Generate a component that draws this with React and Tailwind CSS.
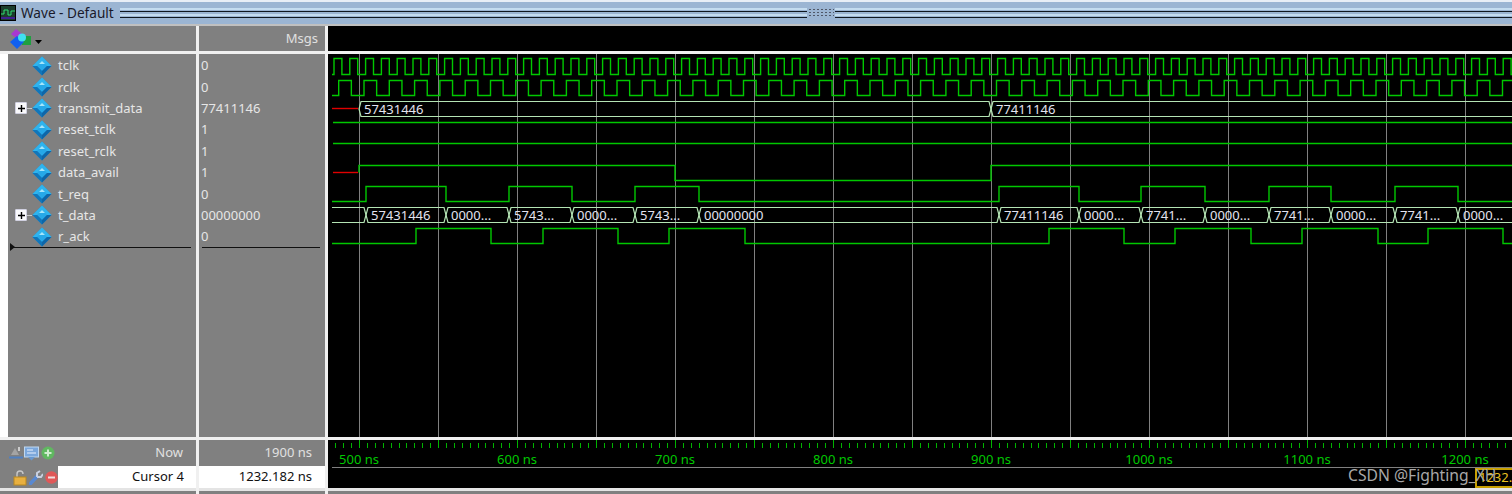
import React from "react";

const font = { fontFamily: '"Noto Sans", Tahoma, sans-serif' };

const signals = [
  { name: "tclk", value: "0" },
  { name: "rclk", value: "0" },
  { name: "transmit_data", value: "77411146", expand: true },
  { name: "reset_tclk", value: "1" },
  { name: "reset_rclk", value: "1" },
  { name: "data_avail", value: "1" },
  { name: "t_req", value: "0" },
  { name: "t_data", value: "00000000", expand: true },
  { name: "r_ack", value: "0" },
];

// wave pane starts at x=328, y=54 on the page
const X0 = 328;
const Y0 = 54;
const WIDTH = 1184;
const HEIGHT = 383;
const px = (x) => x - X0;
const py = (y) => y - Y0;

function clock(firstRise, period, high, low) {
  let d = `M${px(332)} ${py(low)}`;
  for (let x = firstRise; x < 1520; x += period) {
    d += ` H${px(x)} V${py(high)} H${px(x + period / 2)} V${py(low)}`;
  }
  return d;
}

function steps(edges, high, low) {
  let isLow = true;
  let d = `M${px(332)} ${py(low)}`;
  edges.forEach((x) => {
    isLow = !isLow;
    d += ` H${px(x)} V${py(isLow ? low : high)}`;
  });
  return d + ` H${WIDTH}`;
}

const tReqEdges = [366, 446, 509, 572, 635, 699, 999, 1079, 1141, 1205, 1269, 1331, 1395, 1458];
const rAckEdges = [416, 491, 543, 618, 669, 745, 1049, 1124, 1175, 1251, 1302, 1378, 1428, 1503];

const tDataLabels = [
  "", "57431446", "0000...", "5743...", "0000...", "5743...", "00000000",
  "77411146", "0000...", "7741...", "0000...", "7741...", "0000...", "7741...", "0000...",
];

const grid = Array.from({ length: 15 }, (_, i) => 359 + 79 * i);

function BusSegment({ from, to, top, bottom, label, start }) {
  const l = px(from);
  const r = px(to);
  const t = py(top);
  const b = py(bottom);
  const m = (t + b) / 2;
  const d = start
    ? `M${l} ${t} H${r - 2} L${r} ${m} L${r - 2} ${b} H${l}`
    : `M${l + 2} ${t} H${r - 2} L${r} ${m} L${r - 2} ${b} H${l + 2} L${l} ${m} Z`;
  return (
    <g>
      <path d={d} fill="none" stroke="#b4e4b4" strokeWidth="1.2" />
      {label && (
        <text x={l + 5} y={b - 3} fill="#e4e4f0" fontSize="13" style={font}>
          {label}
        </text>
      )}
    </g>
  );
}

function WavePane() {
  const tData = [332, ...tReqEdges, 1530];
  return (
    <svg width={WIDTH} height={HEIGHT} className="block">
      {grid.map((x) => (
        <line key={x} x1={px(x) + 0.5} x2={px(x) + 0.5} y1={0} y2={HEIGHT} stroke="#808080" />
      ))}
      <g fill="none" stroke="#00c800" strokeWidth="1.4">
        <path d={clock(334, 15.8, 58.5, 74.5)} />
        <path d={clock(338.7, 25.3, 80.5, 95.5)} />
        <path d={`M${px(333)} ${py(122.5)} H${WIDTH}`} />
        <path d={`M${px(333)} ${py(143.5)} H${WIDTH}`} />
        <path d={`M${px(359)} ${py(172.5)} V${py(165.5)} H${px(675)} V${py(180.5)} H${px(991)} V${py(165.5)} H${WIDTH}`} />
        <path d={steps(tReqEdges, 186.5, 201.5)} />
        <path d={steps(rAckEdges, 228.5, 243.5)} />
      </g>
      <path d={`M${px(332)} ${py(108.5)} H${px(358)}`} stroke="#e00000" strokeWidth="1.4" />
      <path d={`M${px(333)} ${py(172.5)} H${px(358)}`} stroke="#e00000" strokeWidth="1.4" />
      <BusSegment from={359} to={991} top={101.5} bottom={116.5} label="57431446" />
      <BusSegment from={991} to={1530} top={101.5} bottom={116.5} label="77411146" />
      {tData.slice(0, -1).map((x, i) => (
        <BusSegment
          key={x}
          from={x}
          to={tData[i + 1]}
          top={207.5}
          bottom={222.5}
          label={tDataLabels[i]}
          start={i === 0}
        />
      ))}
    </svg>
  );
}

function Ruler() {
  const ticks = Array.from({ length: 150 }, (_, i) => 359 - 23.7 + 7.9 * i);
  const labels = [500, 600, 700, 800, 900, 1000, 1100, 1200];
  return (
    <svg width={WIDTH} height={48} className="block">
      {ticks.map((x, i) => (
        <line
          key={i}
          x1={Math.round(px(x)) + 0.5}
          x2={Math.round(px(x)) + 0.5}
          y1={(i - 3) % 10 === 0 ? 0 : 3}
          y2={8}
          stroke="#00b400"
        />
      ))}
      {labels.map((n, i) => (
        <text key={n} x={px(359 + 158 * i)} y={24} textAnchor="middle" fill="#00c800" fontSize="13" style={font}>
          {n} ns
        </text>
      ))}
      <line x1={px(332)} x2={WIDTH} y1={27.5} y2={27.5} stroke="#808080" />
    </svg>
  );
}

function Diamond() {
  return (
    <svg width="20" height="20" viewBox="0 0 20 20" className="shrink-0">
      <path d="M10 0.5 L19.5 10 L10 19.5 L0.5 10 Z" fill="#1b8ed0" />
      <path d="M10 0.5 L19.5 10 H0.5 Z" fill="#2fb4ee" />
      <path d="M10 5 L15 10 L10 15 L5 10 Z" fill="#26a8e8" />
      <path d="M10 5 L13 8 H7 Z" fill="#a6e6fb" />
      <path d="M0.5 10 L10 19.5 L10 15 L5 10 Z" fill="#1176ba" />
      <path d="M19.5 10 L10 19.5 L10 15 L15 10 Z" fill="#0e66a8" />
    </svg>
  );
}

function ExpandBox() {
  return (
    <span className="flex h-[12px] w-[12px] shrink-0 items-center justify-center rounded-[1px] border border-[#d0d0e0] bg-[#fafafc]">
      <svg width="7" height="7" viewBox="0 0 7 7">
        <path d="M0 3.5H7M3.5 0V7" stroke="#000" strokeWidth="1.4" />
      </svg>
    </span>
  );
}

function NameRow({ signal }) {
  return (
    <div className="flex h-[21.4px] items-center">
      <div className="flex w-[32px] shrink-0 items-center justify-end">
        {signal.expand && (
          <>
            <ExpandBox />
            <span className="h-px w-[5px] bg-[#c8c8c8]" />
          </>
        )}
      </div>
      <Diamond />
      <span className="ml-[6px] text-[13px] leading-none text-[#e6e6e6]">{signal.name}</span>
    </div>
  );
}

function LayoutsIcon() {
  return (
    <svg width="24" height="22" viewBox="0 0 24 22">
      <path d="M7 1 L13 6 L7 10 L2 6 Z" fill="#a838d0" />
      <rect x="13" y="8" width="9" height="9" fill="#1fa040" />
      <path d="M8 8 L15 14 L8 21 L1 14 Z" fill="#1060f0" />
      <circle cx="13" cy="9.5" r="4" fill="#40e0f0" />
    </svg>
  );
}

function Grip({ className }) {
  return (
    <div className={`flex h-[10px] flex-col justify-between ${className}`}>
      <div className="h-[2px] bg-[#c4dcf0]" />
      <div className="h-px bg-[#101820]" />
      <div className="h-[2px] bg-[#c4dcf0]" />
      <div className="h-px bg-[#101820]" />
    </div>
  );
}

function NowIcons() {
  return (
    <div className="flex items-center gap-[1px] pl-[9px]">
      <svg width="14" height="14" viewBox="0 0 14 14">
        <path d="M2 9 L6 2 L10 9Z" fill="#a4a4a4" />
        <path d="M9 1h2v4h-2z" fill="#cccccc" />
        <path d="M0 11.5H14" stroke="#5080c0" strokeWidth="2" />
      </svg>
      <svg width="15" height="15" viewBox="0 0 15 15">
        <rect x="0.5" y="1" width="14" height="10" fill="#7ca8dc" stroke="#c0d8f0" />
        <path d="M3 4H9M3 7H12" stroke="#e8f0ff" />
        <path d="M4 11H11L7.5 14.5Z" fill="#6898d0" />
      </svg>
      <svg width="14" height="14" viewBox="0 0 14 14" className="ml-[1px]">
        <circle cx="7" cy="7" r="6.5" fill="#60b860" />
        <path d="M3.5 7H10.5M7 3.5V10.5" stroke="#cfeccf" strokeWidth="2" />
      </svg>
    </div>
  );
}

function CursorIcons() {
  return (
    <div className="flex w-[58px] shrink-0 items-center gap-[1px] pl-[13px]">
      <svg width="14" height="16" viewBox="0 0 14 16" className="mt-[2px]">
        <path d="M4 7V4a3 3 0 0 1 6 0" fill="none" stroke="#c8c8c8" strokeWidth="1.4" />
        <rect x="1" y="7" width="12" height="8" fill="#e8b040" stroke="#b88820" />
      </svg>
      <svg width="14" height="15" viewBox="0 0 14 15" className="ml-[1px]">
        <path d="M1.5 13.5 L8 6.5" stroke="#5888d0" strokeWidth="3.6" strokeLinecap="round" />
        <path d="M8 7 L8 3 L11 1 M8 7 L12 7 L14 4" stroke="#c8d0e0" strokeWidth="2" fill="none" />
      </svg>
      <svg width="13" height="13" viewBox="0 0 13 13" className="ml-[1px]">
        <circle cx="6.5" cy="6.5" r="6.2" fill="#e05858" />
        <path d="M3 6.5H10" stroke="#f0e0e0" strokeWidth="2" />
      </svg>
    </div>
  );
}

export default function App() {
  return (
    <div className="flex h-[494px] w-[1512px] flex-col overflow-hidden bg-[#808080]" style={font}>
      {/* title bar */}
      <div className="flex h-[26px] shrink-0 items-center border-t-2 border-b-2 border-t-[#e8eef6] border-b-[#c0c0c0] bg-[#9bb5d3]">
        <div className="flex h-[16px] w-[16px] shrink-0 items-center justify-center border border-black bg-[#1c3c2c]">
          <svg width="14" height="12" viewBox="0 0 14 12">
            <path d="M0 7H3V3H7V8H10V4H14" fill="none" stroke="#30e070" />
            <rect x="0" y="10" width="14" height="2" fill="#402090" />
          </svg>
        </div>
        <span className="ml-[5px] text-[13.6px] leading-none text-[#1a1a2a]">Wave - Default</span>
        <Grip className="ml-[6px] w-[687px]" />
        <div className="mx-[1px] h-[10px] w-[26px] bg-[radial-gradient(#505868_1px,transparent_1px)] bg-[length:4px_3px]" />
        <Grip className="flex-1" />
      </div>

      <div className="flex flex-1">
        {/* names column */}
        <div className="flex w-[196px] shrink-0 flex-col">
          <div className="flex h-[25px] items-center gap-[2px] pl-[9px]">
            <LayoutsIcon />
            <svg width="7" height="4" viewBox="0 0 7 4" className="mt-[6px]">
              <path d="M0 0H7L3.5 4Z" fill="#000" />
            </svg>
          </div>
          <div className="h-[3px] bg-[#f0f0f0]" />
          <div className="relative h-[383px] bg-[linear-gradient(90deg,#ffffff_8px,#808080_8px)] pt-[1px]">
            {signals.map((s) => (
              <NameRow key={s.name} signal={s} />
            ))}
            <div className="absolute left-[11px] right-[5px] top-[193px] h-px bg-[#101010]" />
            <div className="absolute left-[10px] top-[189px] h-0 w-0 border-y-[4px] border-l-[5px] border-y-transparent border-l-[#101010]" />
          </div>
          <div className="h-[3px] bg-[#f0f0f0]" />
          <div className="flex h-[26px] items-center justify-between pr-[13px]">
            <NowIcons />
            <span className="text-[13px] text-[#e0e0e0]">Now</span>
          </div>
          <div className="flex h-[22px] items-center">
            <CursorIcons />
            <div className="flex h-full flex-1 items-center justify-end bg-white pr-[12px] text-[13px] text-[#101010]">
              Cursor 4
            </div>
          </div>
          <div className="h-[3px] bg-[#e4e4e4]" />
        </div>

        <div className="w-[3px] shrink-0 bg-[#f0f0f0]" />

        {/* values column */}
        <div className="flex w-[126px] shrink-0 flex-col">
          <div className="flex h-[25px] items-center justify-end pr-[7px] text-[13px] text-[#e0e0e0]">Msgs</div>
          <div className="h-[3px] bg-[#f0f0f0]" />
          <div className="relative h-[383px] pl-[2px] pt-[1px]">
            {signals.map((s) => (
              <div key={s.name} className="flex h-[21.4px] items-center text-[13px] leading-none text-[#e6e6e6]">
                {s.value}
              </div>
            ))}
            <div className="absolute left-[3px] right-[5px] top-[193px] h-px bg-[#101010]" />
          </div>
          <div className="h-[3px] bg-[#f0f0f0]" />
          <div className="flex h-[26px] items-center justify-end pr-[13px] text-[13px] text-[#e0e0e0]">1900 ns</div>
          <div className="flex h-[22px] items-center justify-end bg-white pr-[13px] text-[13px] text-[#101010]">
            1232.182 ns
          </div>
          <div className="h-[3px] bg-[#e4e4e4]" />
        </div>

        <div className="w-[3px] shrink-0 bg-[#f0f0f0]" />

        {/* wave column */}
        <div className="flex flex-1 flex-col bg-black">
          <div className="h-[25px]" />
          <div className="h-[3px] bg-[#f0f0f0]" />
          <div className="h-[383px] overflow-hidden">
            <WavePane />
          </div>
          <div className="h-[3px] bg-[#f0f0f0]" />
          <div className="relative h-[48px] overflow-hidden">
            <Ruler />
            <div className="absolute bottom-0 left-[1147px] flex h-[20px] w-[40px] items-center border-2 border-r-0 border-[#c8a000] pl-[2px] text-[13px] text-[#e8c020]">
              1232.
            </div>
            <span className="absolute left-[1020px] top-[27px] whitespace-nowrap text-[15.7px] leading-[16px] text-[#a8a8a8]">
              CSDN @Fighting_XH
            </span>
          </div>
          <div className="h-[3px] bg-[#e4e4e4]" />
          <div className="h-[3px] bg-[#808080]" />
        </div>
      </div>
    </div>
  );
}
